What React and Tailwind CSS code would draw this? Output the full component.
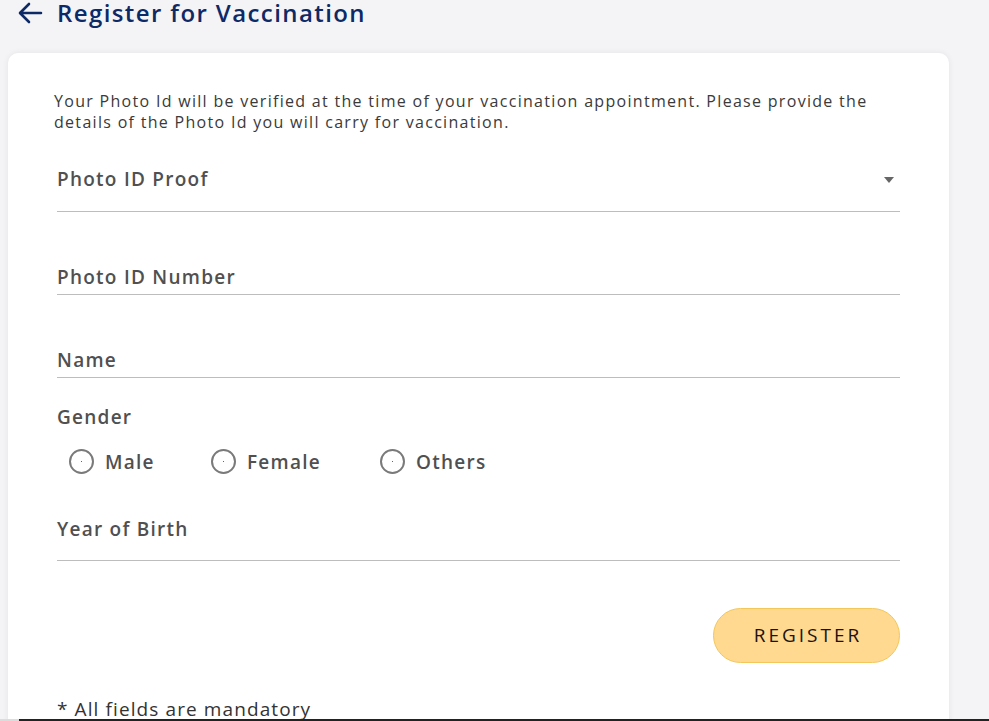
import React, { useState } from "react";

const font = { fontFamily: '"Open Sans", "Liberation Sans", sans-serif' };

const ArrowLeft = () => (
  <svg width="26" height="24" viewBox="0 0 26 24" fill="none">
    <path
      d="M24 12H4M12 3L3 12l9 9"
      stroke="#0d2a66"
      strokeWidth="2.6"
      strokeLinecap="round"
      strokeLinejoin="round"
    />
  </svg>
);

const labelCls =
  "text-[19px] font-semibold leading-6 tracking-[1.25px] text-[#505050]";

const Radio = ({ label, checked, onChange }) => (
  <label className="flex cursor-pointer items-center gap-[11px]">
    <span className="flex h-[25px] w-[25px] items-center justify-center rounded-full border-2 border-[#7a7a7a]">
      <span
        className={
          checked
            ? "h-[11px] w-[11px] rounded-full bg-[#555]"
            : "h-[1.5px] w-[1.5px] rounded-full bg-[#333]"
        }
      />
    </span>
    <span className={labelCls}>{label}</span>
    <input type="radio" className="hidden" checked={checked} onChange={onChange} />
  </label>
);

export default function App() {
  const [gender, setGender] = useState("");

  return (
    <div
      className="relative h-[721px] w-full overflow-hidden bg-[#f4f4f6]"
      style={font}
    >
      {/* Шапка */}
      <div className="flex h-[25px] items-center gap-[14px] pl-[17px]">
        <ArrowLeft />
        <h1 className="text-[24px] font-semibold leading-[25px] tracking-[1.4px] text-[#0d2a66]">
          Register for Vaccination
        </h1>
      </div>

      {/* Карточка формы */}
      <div className="mt-[28px] ml-2 w-[941px] rounded-[10px] bg-white pt-[38px] pr-[49px] pl-[49px] pb-10 shadow-[0_0_6px_rgba(0,0,0,0.07)]">
        <p className="-ml-[3px] text-base leading-[21px] tracking-[1.3px] text-[#3a3a3a]">
          Your Photo Id will be verified at the time of your vaccination
          appointment. Please provide the details of the Photo Id you will
          carry for vaccination.
        </p>

        <div className="flex items-start justify-between border-b border-[#bdbdbd] pt-[34px] pb-[20px]">
          <span className={labelCls}>Photo ID Proof</span>
          <span className="mt-[10px] mr-[6px] h-0 w-0 border-t-[6px] border-r-[5.5px] border-l-[5.5px] border-t-[#666] border-r-transparent border-l-transparent" />
        </div>

        <div className="border-b border-[#bdbdbd] pt-[53px] pb-[4px]">
          <span className={labelCls}>Photo ID Number</span>
        </div>

        <div className="border-b border-[#bdbdbd] pt-[53px] pb-[4px]">
          <span className={labelCls}>Name</span>
        </div>

        <div className={"mt-[27px] " + labelCls}>Gender</div>
        <div className="mt-5 flex items-center pl-[12px]">
          <div className="w-[142px]">
            <Radio label="Male" checked={gender === "m"} onChange={() => setGender("m")} />
          </div>
          <div className="w-[169px]">
            <Radio label="Female" checked={gender === "f"} onChange={() => setGender("f")} />
          </div>
          <Radio label="Others" checked={gender === "o"} onChange={() => setGender("o")} />
        </div>

        <div className="border-b border-[#bdbdbd] pt-[43px] pb-[18px]">
          <span className={labelCls}>Year of Birth</span>
        </div>

        <div className="mt-[47px] flex justify-end">
          <button className="h-[55px] w-[187px] rounded-full border border-[#f3c75a] bg-[#ffd98f] pl-[3px] text-[19px] font-medium tracking-[3px] text-[#1b1212]">
            REGISTER
          </button>
        </div>

        <p className="mt-[34px] text-[19px] leading-6 tracking-[1.1px] text-[#333]">
          * All fields are mandatory
        </p>
      </div>

      {/* Нижняя полоса */}
      <div className="absolute right-0 bottom-0 left-0 flex h-[2px]">
        <div className="w-[19px] bg-[#dcdcdc]" />
        <div className="flex-1 bg-[#222]" />
      </div>
    </div>
  );
}
